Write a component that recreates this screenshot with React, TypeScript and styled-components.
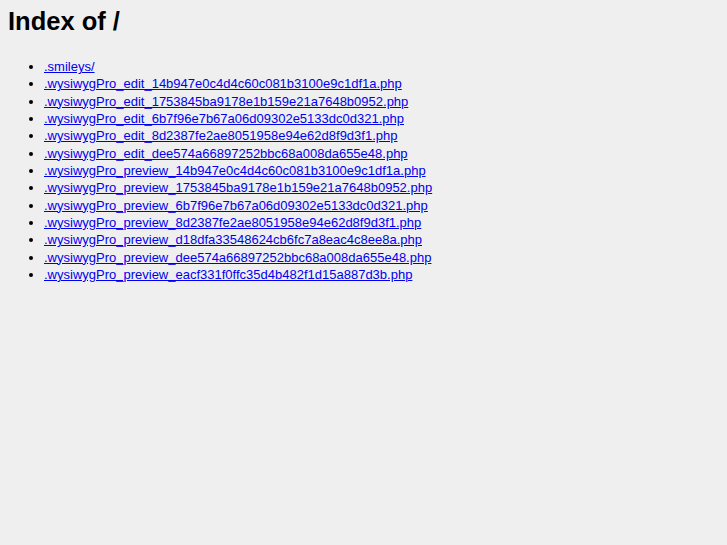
import React from "react";
import styled, { createGlobalStyle } from "styled-components";

const Global = createGlobalStyle`
  html, body { background: #efefef; }
  body { margin: 8px; font-family: "Liberation Sans", Arial, sans-serif; color: #000; }
`;

const Title = styled.h1`
  font-size: 25.5px;
  font-weight: bold;
  margin: -1px 0 0;
  line-height: 29px;
`;

const List = styled.ul`
  margin: 22px 0 0;
  padding-left: 36px;
  font-size: 13px;
  line-height: 17.33px;
`;

const Link = styled.a`
  color: #0000ee;
  text-decoration: underline;
`;

const files = [
  ".smileys/",
  ".wysiwygPro_edit_14b947e0c4d4c60c081b3100e9c1df1a.php",
  ".wysiwygPro_edit_1753845ba9178e1b159e21a7648b0952.php",
  ".wysiwygPro_edit_6b7f96e7b67a06d09302e5133dc0d321.php",
  ".wysiwygPro_edit_8d2387fe2ae8051958e94e62d8f9d3f1.php",
  ".wysiwygPro_edit_dee574a66897252bbc68a008da655e48.php",
  ".wysiwygPro_preview_14b947e0c4d4c60c081b3100e9c1df1a.php",
  ".wysiwygPro_preview_1753845ba9178e1b159e21a7648b0952.php",
  ".wysiwygPro_preview_6b7f96e7b67a06d09302e5133dc0d321.php",
  ".wysiwygPro_preview_8d2387fe2ae8051958e94e62d8f9d3f1.php",
  ".wysiwygPro_preview_d18dfa33548624cb6fc7a8eac4c8ee8a.php",
  ".wysiwygPro_preview_dee574a66897252bbc68a008da655e48.php",
  ".wysiwygPro_preview_eacf331f0ffc35d4b482f1d15a887d3b.php",
];

export default function App() {
  return (
    <>
      <Global />
      <Title>Index of /</Title>
      <List>
        {files.map((f) => (
          <li key={f}>
            <Link href={"#" + f}>{f}</Link>
          </li>
        ))}
      </List>
    </>
  );
}
